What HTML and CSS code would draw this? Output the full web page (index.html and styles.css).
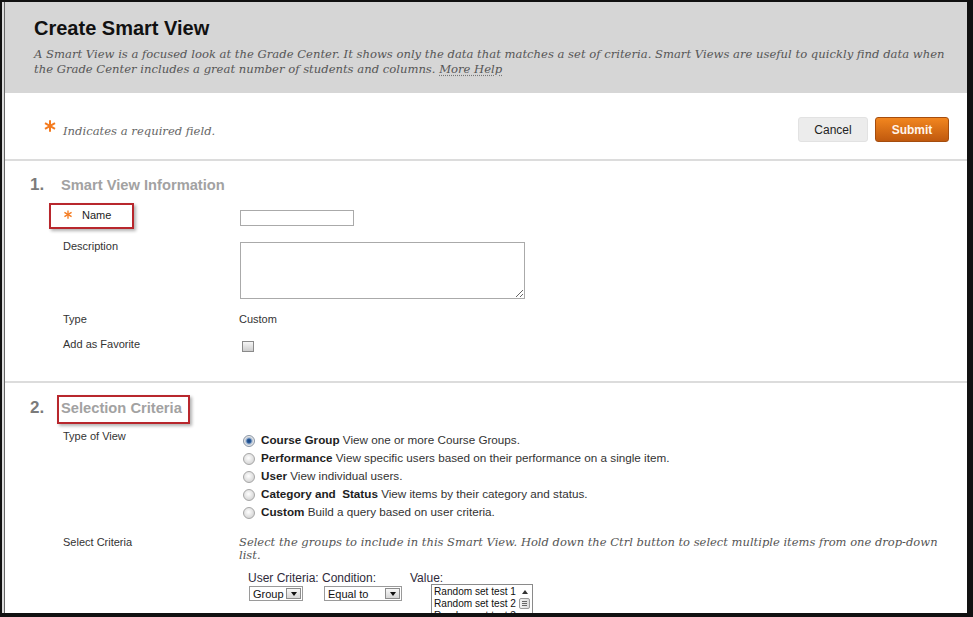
FILE: index.html
```html
<!DOCTYPE html>
<html lang="en">
<head>
<meta charset="utf-8">
<title>Create Smart View</title>
<link rel="stylesheet" href="styles.css">
</head>
<body>
<div class="frame">
  <div class="page">
    <header class="head">
      <h1>Create Smart View</h1>
      <p class="intro">A Smart View is a focused look at the Grade Center. It shows only the data that matches a set of criteria. Smart Views are useful to quickly find data when the Grade Center includes a great number of students and columns. <a class="help" href="#">More Help</a></p>
    </header>

    <div class="reqbar">
      <p class="req">
        <svg class="ast ast-lg" viewBox="0 0 12 12" aria-hidden="true"><g stroke="#f47b20" stroke-width="2"><line x1="6" y1="0.3" x2="6" y2="11.7"/><line x1="1" y1="3.1" x2="11" y2="8.9"/><line x1="1" y1="8.9" x2="11" y2="3.1"/></g></svg>
        <span>Indicates a required field.</span>
      </p>
      <div class="actions">
        <button class="btn cancel" type="button">Cancel</button>
        <button class="btn submit" type="button">Submit</button>
      </div>
    </div>

    <section class="step s1">
      <h2 class="step-h"><span class="num">1.</span><span class="title">Smart View Information</span></h2>

      <div class="row r-name">
        <div class="lbl">
          <span class="mark">
            <svg class="ast ast-sm" viewBox="0 0 12 12" aria-hidden="true"><g stroke="#f47b20" stroke-width="1.8"><line x1="6" y1="0.5" x2="6" y2="11.5"/><line x1="1.2" y1="3.2" x2="10.8" y2="8.8"/><line x1="1.2" y1="8.8" x2="10.8" y2="3.2"/></g></svg>
            <span>Name</span>
          </span>
        </div>
        <div class="fld"><input class="txt" type="text"></div>
      </div>

      <div class="row r-desc">
        <div class="lbl">Description</div>
        <div class="fld"><textarea class="area"></textarea></div>
      </div>

      <div class="row r-type">
        <div class="lbl">Type</div>
        <div class="fld val">Custom</div>
      </div>

      <div class="row r-fav">
        <div class="lbl">Add as Favorite</div>
        <div class="fld"><span class="cb"></span></div>
      </div>
    </section>

    <section class="step s2">
      <h2 class="step-h"><span class="num">2.</span><span class="title boxed">Selection Criteria</span></h2>

      <div class="row r-tov">
        <div class="lbl">Type of View</div>
        <ul class="fld radios">
          <li><span class="radio on"></span><span><b>Course Group</b> View one or more Course Groups.</span></li>
          <li><span class="radio"></span><span><b>Performance</b> View specific users based on their performance on a single item.</span></li>
          <li><span class="radio"></span><span><b>User</b> View individual users.</span></li>
          <li><span class="radio"></span><span><b>Category and&nbsp; Status</b> View items by their category and status.</span></li>
          <li><span class="radio"></span><span><b>Custom</b> Build a query based on user criteria.</span></li>
        </ul>
      </div>

      <div class="row r-sc">
        <div class="lbl">Select Criteria</div>
        <div class="fld">
          <p class="note">Select the groups to include in this Smart View. Hold down the Ctrl button to select multiple items from one drop-down list.</p>
          <div class="crit">
            <span class="clbl">User Criteria:</span>
            <span class="clbl">Condition:</span>
            <span class="clbl">Value:</span>
            <span class="sel sel-group"><span>Group</span><span class="arr"><i></i></span></span>
            <span class="sel sel-cond"><span>Equal to</span><span class="arr"><i></i></span></span>
            <span class="listbox">
              <span class="items">
                <span>Random set test 1</span>
                <span>Random set test 2</span>
                <span>Random set test 3</span>
              </span>
              <span class="sb">
                <span class="up"><i></i></span>
                <span class="thumb"><i></i><i></i><i></i></span>
              </span>
            </span>
          </div>
        </div>
      </div>
    </section>
  </div>
</div>
</body>
</html>
```

FILE: styles.css
```css
html, body {
  margin: 0;
  padding: 0;
  background: #fff;
}

body {
  font-family: "Liberation Sans", Arial, sans-serif;
}

.frame {
  width: 973px;
  height: 617px;
  box-sizing: border-box;
  border-top: 2px solid #111;
  border-left: 2px solid #111;
  border-right: 6px solid #111;
  border-bottom: 4px solid #111;
  background: #dcdcdc;
  overflow: hidden;
}

.page {
  margin-left: 2px;
  border-left: 1px solid #666;
  background: #fff;
  height: 100%;
}

/* header */
.head {
  background: #d6d6d6;
  height: 91px;
  box-sizing: border-box;
  padding: 14px 18px 0 29px;
}

.head h1 {
  margin: 0;
  font-size: 20px;
  line-height: 24px;
  font-weight: bold;
  color: #111;
}

.intro {
  margin: 7px 0 0;
  font-family: "DejaVu Serif", serif;
  font-style: italic;
  font-size: 11.6px;
  line-height: 15px;
  color: #555;
}

.help {
  color: #555;
  text-decoration: underline dotted #777;
  text-underline-offset: 2px;
}

/* required bar */
.reqbar {
  display: flex;
  justify-content: space-between;
  align-items: flex-start;
  height: 68px;
  box-sizing: border-box;
  padding: 24px 18px 0 39px;
  border-bottom: 2px solid #dcdcdc;
}

.req {
  margin: 0;
  display: flex;
  align-items: center;
  gap: 7px;
  height: 25px;
  font-family: "DejaVu Serif", serif;
  font-style: italic;
  font-size: 11.6px;
  color: #666;
}

.req span {
  margin-top: 2px;
}

.ast {
  display: block;
  flex: none;
}

.ast-lg {
  width: 12px;
  height: 12px;
  align-self: flex-start;
  margin-top: 3px;
}

.ast-sm {
  width: 10px;
  height: 9px;
}

.actions {
  display: flex;
  gap: 7px;
}

.btn {
  height: 25px;
  padding: 0;
  border-radius: 3px;
  font-family: "Liberation Sans", Arial, sans-serif;
  font-size: 12px;
  cursor: pointer;
}

.cancel {
  width: 70px;
  background: #ececec;
  border: 1px solid #e2e2e2;
  color: #222;
}

.submit {
  width: 74px;
  background: linear-gradient(#f2861f, #c0590e);
  border: 1px solid #a54d0e;
  color: #fff4ec;
  font-weight: bold;
}

/* steps */
.step {
  padding: 13px 0 0 25px;
  box-sizing: border-box;
  border-bottom: 2px solid #dcdcdc;
}

.s1 {
  height: 222px;
}

.s2 {
  padding-top: 12px;
  border-bottom: 0;
}

.step-h {
  display: flex;
  align-items: baseline;
  height: 22px;
  margin: 0;
  line-height: 22px;
  font-weight: bold;
}

.num {
  width: 31px;
  font-size: 17px;
  color: #7b7b7b;
}

.title {
  font-size: 14.7px;
  color: #a2a2a2;
}

.title.boxed {
  margin-left: -4px;
  border: 2px solid #b8272d;
  padding: 0 6px 3px 2px;
  box-shadow: 2px 2px 3px rgba(0, 0, 0, 0.3);
}

.row {
  display: grid;
  grid-template-columns: 176px 1fr;
  margin-left: 33px;
  font-size: 11px;
  line-height: 14px;
  color: #333;
}

.r-name {
  margin-top: 7px;
  height: 26px;
}

.mark {
  display: flex;
  align-items: center;
  box-sizing: border-box;
  width: 85px;
  height: 26px;
  margin-left: -14px;
  border: 2px solid #b8272d;
  padding: 0 0 3px 12px;
  gap: 9px;
  box-shadow: 2px 2px 3px rgba(0, 0, 0, 0.3);
  color: #222;
}

.txt {
  display: block;
  margin: 7px 0 0 1px;
  width: 114px;
  height: 16px;
  box-sizing: border-box;
  border: 1px solid #aaa;
  padding: 0;
}

.r-desc {
  margin-top: 13px;
}

.r-desc .lbl {
  margin-top: -3px;
}

.area {
  display: block;
  margin: 0 0 0 1px;
  width: 285px;
  height: 57px;
  box-sizing: border-box;
  border: 1px solid #aaa;
  padding: 0;
  resize: both;
}

.r-type {
  margin-top: 13px;
}

.r-fav {
  margin-top: 11px;
}

.cb {
  display: block;
  margin: 4px 0 0 3px;
  width: 12px;
  height: 11px;
  box-sizing: border-box;
  border: 1px solid #8a8a8a;
  background: linear-gradient(#f6f6f6, #cdcdcd);
}

/* section 2 */
.r-tov {
  margin-top: 12px;
}

.radios {
  list-style: none;
  margin: 0;
  padding: 2px 0 0 4px;
}

.radios li {
  display: flex;
  align-items: center;
  gap: 6px;
  height: 18px;
  font-size: 11.7px;
  color: #333;
}

.radios b {
  color: #1e1e1e;
}

.radio {
  flex: none;
  width: 12px;
  height: 12px;
  box-sizing: border-box;
  border-radius: 50%;
  border: 1px solid #a6a6a6;
  background: radial-gradient(circle at 45% 40%, #ffffff 0, #e6e6e6 45%, #c9c9c9 100%);
  margin-top: 2px;
}

.radio.on {
  border-color: #8a96a6;
  background: radial-gradient(circle at 50% 50%, #17427c 0, #2c5f9f 2px, #9fb4cf 3px, #e8e8e8 4.5px, #cfcfcf 100%);
}

.r-sc {
  margin-top: 14px;
}

.note {
  margin: 1px 0 0;
  width: 712px;
  font-family: "DejaVu Serif", serif;
  font-style: italic;
  font-size: 11.5px;
  line-height: 13px;
  color: #555;
}

.crit {
  display: grid;
  grid-template-columns: 74px 88px auto;
  justify-content: start;
  align-items: start;
  margin: 10px 0 0 9px;
  font-size: 12px;
  line-height: 12px;
  color: #2f2a3a;
}

.sel {
  display: flex;
  align-items: center;
  justify-content: space-between;
  box-sizing: border-box;
  height: 15px;
  margin-top: 2px;
  border: 1px solid #9a9a9a;
  background: #fff;
  padding-left: 3px;
  font-size: 11px;
  color: #111;
}

.sel-group {
  width: 54px;
  margin-left: 1px;
}

.sel-cond {
  width: 78px;
  margin-left: 2px;
}

.arr {
  display: flex;
  align-items: center;
  justify-content: center;
  box-sizing: border-box;
  width: 15px;
  height: 11px;
  margin-right: 1px;
  border: 1px solid #8c8c8c;
  background: linear-gradient(#f7f7f7, #d6d6d6);
}

.arr i {
  display: block;
  width: 0;
  height: 0;
  border-left: 3.5px solid transparent;
  border-right: 3.5px solid transparent;
  border-top: 4px solid #111;
}

.listbox {
  display: flex;
  width: 102px;
  height: 44px;
  box-sizing: border-box;
  margin: 0 0 0 21px;
  border: 1px solid #8a8a8a;
  background: #fff;
}

.items {
  display: flex;
  flex-direction: column;
  flex: 1;
  min-width: 0;
  padding: 1px 0 0 2px;
  font-size: 10.1px;
  line-height: 12px;
  color: #111;
  white-space: nowrap;
  overflow: hidden;
}

.sb {
  display: flex;
  flex: none;
  flex-direction: column;
  align-items: center;
  width: 15px;
  padding-top: 1px;
  gap: 1px;
}

.up {
  display: flex;
  align-items: center;
  justify-content: center;
  width: 12px;
  height: 11px;
}

.up i {
  display: block;
  width: 0;
  height: 0;
  border-left: 3px solid transparent;
  border-right: 3px solid transparent;
  border-bottom: 4px solid #333;
}

.thumb {
  display: flex;
  flex-direction: column;
  align-items: center;
  justify-content: center;
  gap: 1px;
  width: 11px;
  height: 11px;
  box-sizing: border-box;
  border: 1px solid #9a9a9a;
  border-radius: 2px;
  background: linear-gradient(90deg, #f2f2f2, #dcdcdc);
}

.thumb i {
  display: block;
  width: 5px;
  height: 1px;
  background: #666;
}
```
